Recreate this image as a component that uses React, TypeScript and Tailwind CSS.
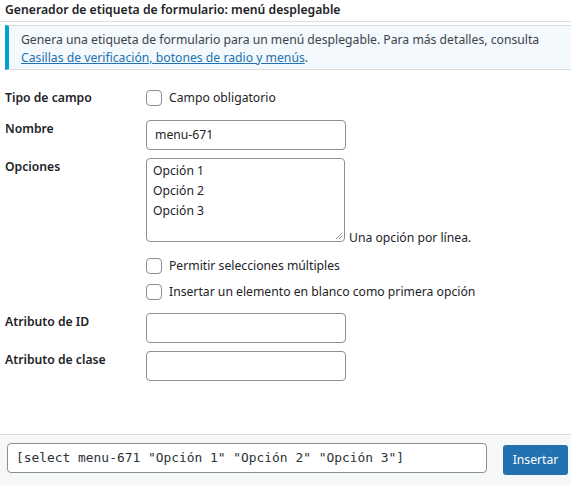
const font = "font-['Noto_Sans',sans-serif]"

function Box() {
  return <span className="block w-4 h-4 shrink-0 rounded-[4px] border border-[#8c8f94] bg-white" />
}

function Row({ label, children, className = '' }: { label: string; children: React.ReactNode; className?: string }) {
  return (
    <div className={`flex items-start ${className}`}>
      <div className="w-[141px] shrink-0 font-semibold leading-[16px] pt-[1px]">{label}</div>
      {children}
    </div>
  )
}

export default function App() {
  return (
    <div className={`w-[571px] h-[485px] bg-white flex flex-col text-[12.2px] text-[#1d2327] overflow-hidden ${font}`}>
      <div className="h-[22px] px-[5px] font-semibold leading-[19px] border-b border-[#dcdcde]">
        Generador de etiqueta de formulario: menú desplegable
      </div>
      <div className="mt-[3px] ml-[5px] border-l-4 border-l-[#00a0d2] border-y border-y-[#dcdcde] bg-[#f3f9fd] px-3 pt-[5px] pb-[3px] leading-[17.5px] text-[#3c434a]">
        Genera una etiqueta de formulario para un menú desplegable. Para más detalles, consulta{' '}
        <a className="text-[#2271b1] underline">Casillas de verificación, botones de radio y menús</a>.
      </div>

      <div className="px-[5px] flex flex-col text-[#1d2327]">
        <Row label="Tipo de campo" className="mt-[19px]">
          <label className="flex items-center gap-[7px] mt-[1px]">
            <Box />
            <span className="leading-[16px]">Campo obligatorio</span>
          </label>
        </Row>

        <Row label="Nombre" className="mt-[14px]">
          <div className="w-[200px] h-[30px] rounded-[4px] border border-[#8c8f94] px-2 flex items-center">menu-671</div>
        </Row>

        <Row label="Opciones" className="mt-[8px]">
          <div className="flex items-end">
            <div className="relative w-[199px] h-[84px] rounded-[4px] border border-[#8c8f94] px-[6px] py-[2px] leading-[20px]">
              <div>Opción 1</div>
              <div>Opción 2</div>
              <div>Opción 3</div>
              <svg className="absolute right-[1px] bottom-[1px]" width="8" height="8" viewBox="0 0 8 8">
                <path d="M7 1L1 7M7 4L4 7" stroke="#8c8f94" strokeWidth="1" />
              </svg>
            </div>
            <span className="ml-[4px] -mb-[4px] leading-[16px]">Una opción por línea.</span>
          </div>
        </Row>

        <div className="ml-[141px] mt-[16px] flex flex-col gap-[10px]">
          <label className="flex items-center gap-[7px]">
            <Box />
            <span className="leading-[16px]">Permitir selecciones múltiples</span>
          </label>
          <label className="flex items-center gap-[7px]">
            <Box />
            <span className="leading-[16px]">Insertar un elemento en blanco como primera opción</span>
          </label>
        </div>

        <Row label="Atributo de ID" className="mt-[13px]">
          <div className="w-[200px] h-[30px] rounded-[4px] border border-[#8c8f94]" />
        </Row>
        <Row label="Atributo de clase" className="mt-[8px]">
          <div className="w-[200px] h-[30px] rounded-[4px] border border-[#8c8f94]" />
        </Row>
      </div>

      <div className="mt-auto h-[51px] border-t border-[#dcdcde] bg-[#f6f7f7] flex items-start pt-[8px] pl-[7px] gap-4">
        <div className="w-[480px] h-[30px] rounded-[4px] border border-[#8c8f94] bg-white px-2 flex items-center font-['DejaVu_Sans_Mono',monospace] text-[12.9px] text-[#2c3338] whitespace-nowrap">
          [select menu-671 "Opción 1" "Opción 2" "Opción 3"]
        </div>
        <button className="w-[65px] h-[30px] rounded-[3px] bg-[#2271b1] text-white mt-[2px]">Insertar</button>
      </div>
    </div>
  )
}
